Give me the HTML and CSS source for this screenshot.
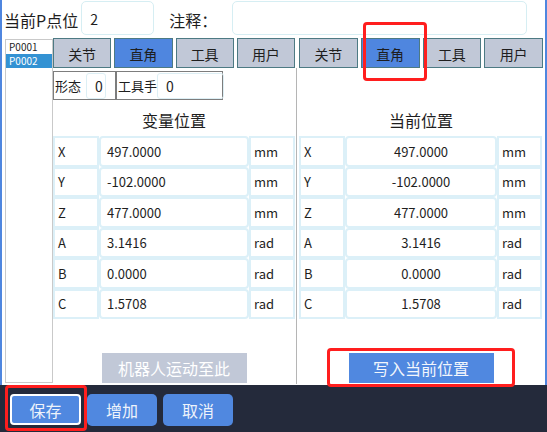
FILE: index.html
```html
<!DOCTYPE html>
<html lang="zh-CN">
<head>
<meta charset="utf-8">
<title>点位编辑</title>
<link rel="stylesheet" href="styles.css">
</head>
<body>
<div class="main">
  <div class="topbar">
    <span class="lbl-big">当前P点位</span>
    <div class="field f-point">2</div>
    <span class="lbl-big lbl-note">注释：</span>
    <div class="field f-note"></div>
  </div>
  <div class="content">
    <ul class="plist">
      <li>P0001</li>
      <li class="sel">P0002</li>
    </ul>
    <section class="panel panel-left">
      <div class="tabs">
        <div class="tab">关节</div>
        <div class="tab active">直角</div>
        <div class="tab">工具</div>
        <div class="tab">用户</div>
      </div>
      <div class="pose">
        <div class="pbox p1"><span class="plbl">形态</span><div class="pin pin1">0</div></div>
        <div class="pbox p2"><span class="plbl">工具手</span><div class="pin pin2">0</div></div>
      </div>
      <div class="ptitle">变量位置</div>
      <div class="grid">
        <div class="cell">X</div><div class="cell val">497.0000</div><div class="cell">mm</div>
        <div class="cell">Y</div><div class="cell val">-102.0000</div><div class="cell">mm</div>
        <div class="cell">Z</div><div class="cell val">477.0000</div><div class="cell">mm</div>
        <div class="cell">A</div><div class="cell val">3.1416</div><div class="cell">rad</div>
        <div class="cell">B</div><div class="cell val">0.0000</div><div class="cell">rad</div>
        <div class="cell">C</div><div class="cell val">1.5708</div><div class="cell">rad</div>
      </div>
      <div class="actions"><button class="btn-wide disabled">机器人运动至此</button></div>
    </section>
    <div class="divider"></div>
    <section class="panel panel-right">
      <div class="tabs">
        <div class="tab">关节</div>
        <div class="tab active">直角</div>
        <div class="tab">工具</div>
        <div class="tab">用户</div>
      </div>
      <div class="pose-space"></div>
      <div class="ptitle">当前位置</div>
      <div class="grid">
        <div class="cell">X</div><div class="cell val">497.0000</div><div class="cell">mm</div>
        <div class="cell">Y</div><div class="cell val">-102.0000</div><div class="cell">mm</div>
        <div class="cell">Z</div><div class="cell val">477.0000</div><div class="cell">mm</div>
        <div class="cell">A</div><div class="cell val">3.1416</div><div class="cell">rad</div>
        <div class="cell">B</div><div class="cell val">0.0000</div><div class="cell">rad</div>
        <div class="cell">C</div><div class="cell val">1.5708</div><div class="cell">rad</div>
      </div>
      <div class="actions"><button class="btn-wide primary">写入当前位置</button></div>
    </section>
  </div>
</div>
<div class="footer">
  <button class="fbtn focus">保存</button>
  <button class="fbtn">增加</button>
  <button class="fbtn">取消</button>
</div>
<div class="mark m-tab"></div>
<div class="mark m-write"></div>
<div class="mark m-save"></div>
</body>
</html>
```
FILE: styles.css
```css
html, body {
  margin: 0;
  padding: 0;
}
body {
  width: 547px;
  height: 432px;
  overflow: hidden;
  position: relative;
  background: #ffffff;
  color: #1e1e1e;
  font-family: "Noto Sans CJK SC", "Noto Sans", sans-serif;
}
.main {
  height: 385px;
  box-sizing: border-box;
  border-left: 2px solid #4f86df;
  border-right: 2px solid #4f86df;
  display: flex;
  flex-direction: column;
}
.topbar {
  height: 38px;
  flex: none;
  display: flex;
  align-items: flex-start;
  padding-left: 2px;
}
.lbl-big {
  font-size: 16px;
  line-height: 40px;
  white-space: nowrap;
}
.field {
  margin-top: 1px;
  height: 34px;
  box-sizing: border-box;
  border: 1px solid #d6eef3;
  border-radius: 5px;
  font-size: 14px;
  line-height: 34px;
  padding-left: 8px;
}
.f-point {
  width: 73px;
  margin-left: 3px;
}
.lbl-note {
  margin-left: 15px;
}
.f-note {
  width: 295px;
  margin-left: 15px;
}
.content {
  flex: 1;
  display: flex;
  min-height: 0;
}
.plist {
  margin: 1px 0 2px 3px;
  padding: 0;
  list-style: none;
  width: 48px;
  flex: none;
  box-sizing: border-box;
  border: 1px solid #c9c9c9;
  font-size: 10px;
}
.plist li {
  height: 14px;
  line-height: 14px;
  padding-left: 3px;
}
.plist li.sel {
  background: #3392d3;
  color: #ffffff;
}
.panel {
  display: flex;
  flex-direction: column;
  box-sizing: border-box;
  flex: none;
}
.panel-left {
  width: 243px;
  padding-right: 1px;
}
.panel-right {
  width: 246px;
  padding-left: 2px;
}
.divider {
  width: 1px;
  flex: none;
  background: #b5b5b5;
  margin-top: 30px;
  margin-bottom: 1px;
}
.tabs {
  display: grid;
  grid-template-columns: repeat(4, 1fr);
  column-gap: 3px;
  height: 30px;
}
.tab {
  border: 1px solid #4d7a83;
  background: #c1c8d7;
  font-size: 14px;
  display: flex;
  align-items: center;
  justify-content: center;
  padding-top: 2px;
  box-sizing: border-box;
}
.tab.active {
  background: #4f86df;
}
.pose {
  display: flex;
  margin-top: 3px;
  height: 29px;
}
.pose-space {
  height: 32px;
}
.pbox {
  border: 1px solid #7d7d7d;
  display: flex;
  align-items: center;
  box-sizing: border-box;
  font-size: 13px;
  padding-left: 1px;
  flex: none;
}
.plbl {
  white-space: nowrap;
  flex: none;
}
.p1 {
  width: 63px;
}
.p2 {
  width: 107px;
}
.pin {
  height: 26px;
  box-sizing: border-box;
  border: 1px solid #ddeff5;
  border-radius: 3px;
  display: flex;
  align-items: center;
  font-size: 14px;
  flex: none;
}
.pin1 {
  width: 20px;
  margin-left: 5px;
  padding-left: 8px;
}
.pin2 {
  width: 67px;
  margin-left: 0;
  padding-left: 8px;
}
.ptitle {
  height: 36px;
  box-sizing: border-box;
  padding-top: 4px;
  line-height: 32px;
  font-size: 16px;
  text-align: center;
}
.grid {
  display: grid;
  grid-template-columns: 46px 150px 46px;
  grid-auto-rows: 30.5px;
  font-size: 13px;
}
.panel-right .grid {
  grid-template-columns: 46px 152px 45px;
}
.cell {
  border: 2px solid #dcf0f8;
  display: flex;
  align-items: center;
  padding-left: 3px;
  box-sizing: border-box;
}
.cell.val {
  border-radius: 4px;
  padding-left: 6px;
}
.panel-right .cell.val {
  justify-content: center;
  padding-left: 0;
}
.actions {
  margin-top: auto;
  margin-bottom: 2px;
  display: flex;
  justify-content: center;
}
.btn-wide {
  width: 145px;
  height: 30px;
  border: none;
  padding: 0;
  font-family: inherit;
  font-size: 16px;
  color: #ffffff;
}
.btn-wide.disabled {
  background: #c1c8d7;
}
.btn-wide.primary {
  background: #5088e0;
  color: #f2f6fc;
}
.footer {
  height: 47px;
  background: #242a3b;
  display: flex;
  align-items: flex-start;
  gap: 6px;
  padding: 9px 0 0 10px;
  box-sizing: border-box;
}
.fbtn {
  width: 70px;
  height: 32px;
  border: none;
  border-radius: 5px;
  background: #5088e0;
  color: #eef3fb;
  font-family: inherit;
  font-size: 16px;
  padding: 0;
}
.fbtn.focus {
  width: 71px;
  height: 31px;
  border: 2px solid #ffffff;
  border-radius: 4px;
}
.mark {
  position: absolute;
  box-sizing: border-box;
  border: 3px solid #ff1e1e;
  border-radius: 4px;
  pointer-events: none;
}
.m-tab {
  left: 363px;
  top: 22px;
  width: 64px;
  height: 59px;
}
.m-write {
  left: 327px;
  top: 348px;
  width: 188px;
  height: 39px;
}
.m-save {
  left: 5px;
  top: 385px;
  width: 82px;
  height: 46px;
}
```
